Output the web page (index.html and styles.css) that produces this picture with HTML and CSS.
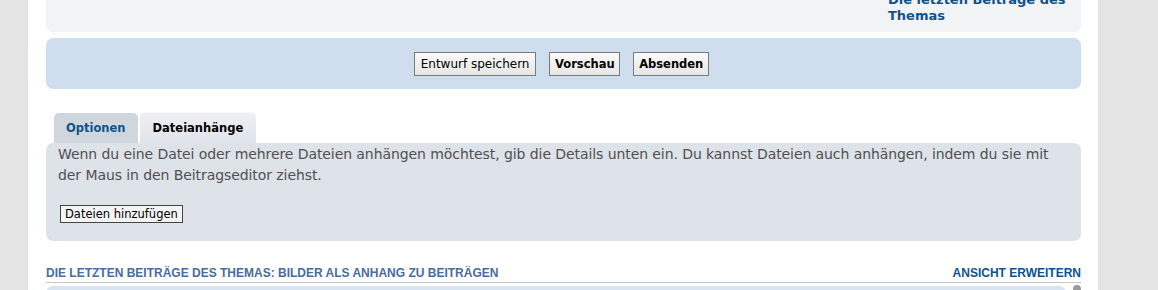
FILE: index.html
```html
<!DOCTYPE html>
<html lang="de">
<head>
    <meta charset="UTF-8">
    <meta name="viewport" content="width=device-width, initial-scale=1.0">
    <title>Antwort erstellen</title>
    <link rel="stylesheet" href="styles.css">
</head>
<body>
    <div class="wrap">
        <div class="panel-top">
            <a class="topic-link" href="#">Die letzten Beiträge des Themas</a>
        </div>

        <div class="submit-panel">
            <button type="button" class="btn">Entwurf speichern</button>
            <button type="button" class="btn btn-bold">Vorschau</button>
            <button type="button" class="btn btn-bold">Absenden</button>
        </div>

        <ul class="tabs">
            <li class="tab">Optionen</li>
            <li class="tab active">Dateianhänge</li>
        </ul>
        <div class="attach-panel">
            <p>Wenn du eine Datei oder mehrere Dateien anhängen möchtest, gib die Details unten ein. Du kannst Dateien auch anhängen, indem du sie mit der Maus in den Beitragseditor ziehst.</p>
            <button type="button" class="btn-add">Dateien hinzufügen</button>
        </div>

        <div class="review-head">
            <span class="review-title">Die letzten Beiträge des Themas: Bilder als Anhang zu Beiträgen</span>
            <a class="review-expand" href="#">Ansicht erweitern</a>
        </div>
        <div class="review-box">
            <span class="scroll-dot"></span>
        </div>
    </div>
</body>
</html>
```

FILE: styles.css
```css
body {
    margin: 0;
    background-color: #e4e4e4;
    font-family: "DejaVu Sans", Verdana, sans-serif;
    color: #333;
    overflow: hidden;
}

.wrap {
    margin-left: 28px;
    width: 1070px;
    min-height: 290px;
    box-sizing: border-box;
    padding: 0 17px 0 18px;
    background-color: #fff;
}

.panel-top {
    display: flex;
    justify-content: flex-end;
    margin-top: -8px;
    padding: 0 11px 8px 0;
    background-color: #f2f3f5;
    border-radius: 0 0 7px 7px;
}

.topic-link {
    width: 182px;
    font-size: 13px;
    font-weight: bold;
    line-height: 16px;
    color: #105289;
    text-decoration: none;
}

.submit-panel {
    display: flex;
    justify-content: center;
    gap: 13px;
    margin-top: 6px;
    padding: 14px 4px 13px 0;
    background-color: #cedeef;
    border-radius: 7px;
}

.btn {
    height: 24px;
    padding: 0 6px;
    border: 1px solid #7a7a7a;
    background: linear-gradient(#fafafa, #e6e6e6);
    font-family: "DejaVu Sans", sans-serif;
    font-size: 12px;
    color: #000;
}

.btn-bold {
    padding: 0 4.5px;
    font-weight: bold;
    font-size: 11.5px;
}

.btn-bold:last-child {
    padding: 0 5px;
}

.tabs {
    display: flex;
    align-items: flex-end;
    gap: 2px;
    list-style: none;
    margin: 23px 0 0;
    padding: 0 0 0 8px;
}

.tab {
    padding: 8px 12px;
    line-height: 14px;
    font-size: 11.5px;
    font-weight: bold;
    color: #105289;
    background-color: #cfd6de;
    border-radius: 5px 5px 0 0;
}

.tab.active {
    padding: 9px 13px 8px;
    color: #000;
    background: linear-gradient(#eef0f3, #e0e4ea);
    box-shadow: inset 0 1px 0 #f6f7f9;
}

.attach-panel {
    padding: 1px 12px 18px;
    background-color: #dee2e9;
    border-radius: 7px;
}

.attach-panel p {
    margin: 0 0 19px;
    font-size: 14px;
    letter-spacing: -0.08px;
    line-height: 21px;
    color: #505050;
}

.btn-add {
    display: block;
    height: 18px;
    margin-left: 2px;
    padding: 0 4px;
    border: 1px solid #444;
    background-color: #f4f4f4;
    font-family: "DejaVu Sans", sans-serif;
    font-size: 11.5px;
    color: #000;
}

.review-head {
    display: flex;
    justify-content: space-between;
    margin-top: 25px;
    padding-bottom: 2px;
    border-bottom: 1px solid #c8c8c8;
    font-family: "Liberation Sans", Arial, sans-serif;
    font-size: 12px;
    font-weight: bold;
    line-height: 14px;
    text-transform: uppercase;
}

.review-title {
    color: #4a6c9e;
}

.review-expand {
    color: #105289;
    text-decoration: none;
}

.review-box {
    position: relative;
    margin: 3px 15px 0 0;
    height: 20px;
    background-color: #d6e3f0;
    border-radius: 7px 7px 0 0;
}

.scroll-dot {
    position: absolute;
    top: -1px;
    right: -15px;
    width: 8px;
    height: 8px;
    border-radius: 50%;
    background-color: #9a9a9a;
}
```
